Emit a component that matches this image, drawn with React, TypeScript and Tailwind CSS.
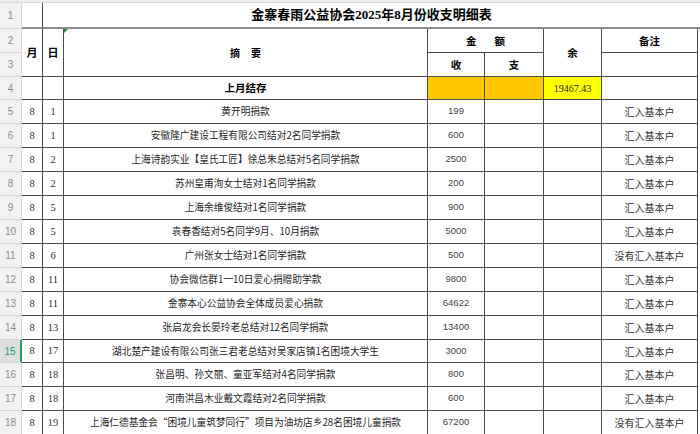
const cols = 'grid grid-cols-[22px_21px_21px_364px_57px_59px_58px_96px_2px]';
const line = 'border-[#4a4a4a]';
const hdrCell = 'flex items-center justify-center bg-[#f2f2f2] border-r border-b border-[#d6d6d6] text-[10px] text-[#8c8c8c] font-["Liberation_Sans",sans-serif]';
const cjk = 'font-["Noto_Sans_CJK_SC",sans-serif]';
const song = 'font-["Liberation_Serif","Noto_Sans_CJK_SC",serif]';

type Row = {
  n: number;
  m: string;
  d: string;
  text: string;
  amt: string;
  note: string;
  h: string;
  active?: boolean;
};

const rows: Row[] = [
  { n: 5, m: '8', d: '1', text: '黄开明捐款', amt: '199', note: '汇入基本户', h: 'h-[24px]' },
  { n: 6, m: '8', d: '1', text: '安徽隆广建设工程有限公司结对2名同学捐款', amt: '600', note: '汇入基本户', h: 'h-[24px]' },
  { n: 7, m: '8', d: '2', text: '上海诗韵实业【皇氏工匠】徐总朱总结对5名同学捐款', amt: '2500', note: '汇入基本户', h: 'h-[24px]' },
  { n: 8, m: '8', d: '2', text: '苏州皇甫洵女士结对1名同学捐款', amt: '200', note: '汇入基本户', h: 'h-[24px]' },
  { n: 9, m: '8', d: '5', text: '上海余维俊结对1名同学捐款', amt: '900', note: '汇入基本户', h: 'h-[24px]' },
  { n: 10, m: '8', d: '5', text: '袁春香结对5名同学9月、10月捐款', amt: '5000', note: '汇入基本户', h: 'h-[24px]' },
  { n: 11, m: '8', d: '6', text: '广州张女士结对1名同学捐款', amt: '500', note: '没有汇入基本户', h: 'h-[24px]' },
  { n: 12, m: '8', d: '11', text: '协会微信群1一10日爱心捐赠助学款', amt: '9800', note: '汇入基本户', h: 'h-[24px]' },
  { n: 13, m: '8', d: '11', text: '金寨本心公益协会全体成员爱心捐款', amt: '64622', note: '汇入基本户', h: 'h-[24px]' },
  { n: 14, m: '8', d: '13', text: '张启龙会长晏玲老总结对12名同学捐款', amt: '13400', note: '汇入基本户', h: 'h-[24px]' },
  { n: 15, m: '8', d: '17', text: '湖北楚产建设有限公司张三君老总结对吴家店镇1名困境大学生', amt: '3000', note: '汇入基本户', h: 'h-[23px]', active: true },
  { n: 16, m: '8', d: '18', text: '张昌明、孙文丽、童亚军结对4名同学捐款', amt: '800', note: '汇入基本户', h: 'h-[24px]' },
  { n: 17, m: '8', d: '18', text: '河南洪昌木业戴文霞结对2名同学捐款', amt: '600', note: '汇入基本户', h: 'h-[24px]' },
  { n: 18, m: '8', d: '19', text: '上海仁德基金会“困境儿童筑梦同行”项目为油坊店乡28名困境儿童捐款', amt: '67200', note: '没有汇入基本户', h: 'h-[24px]' },
];

function DataRow({ r }: { r: Row }) {
  return (
    <div className={`${cols} ${r.h}`}>
      {r.active ? (
        <div className="flex items-center justify-center bg-[#dedede] border-r-2 border-r-[#21a366] border-b border-b-[#d6d6d6] text-[10px] text-[#21a366] font-['Liberation_Sans',sans-serif]">
          {r.n}
        </div>
      ) : (
        <div className={hdrCell}>{r.n}</div>
      )}
      <div className={`flex items-center justify-center border-r border-b ${line} ${song} text-[10.5px] text-[#333]`}>{r.m}</div>
      <div className={`flex items-center justify-center border-r border-b ${line} ${song} text-[10.5px] text-[#333]`}>{r.d}</div>
      <div className={`flex items-center justify-center border-r border-b ${line} ${cjk} text-[9.7px] text-[#262626] whitespace-nowrap overflow-hidden`}>
        {r.text}
      </div>
      <div className={`flex items-center justify-center border-r border-b ${line} font-['Liberation_Sans',sans-serif] text-[9.5px] text-[#444]`}>
        {r.amt}
      </div>
      <div className={`border-r border-b ${line}`} />
      <div className={`border-r border-b ${line}`} />
      <div className={`flex items-center justify-center border-r border-b ${line} ${cjk} text-[10px] text-[#333] whitespace-nowrap`}>
        {r.note}
      </div>
      <div />
    </div>
  );
}

export default function App() {
  return (
    <div className="w-[700px] h-[434px] overflow-hidden bg-white">
      <div className="h-[3px] bg-[#efefef] border-b border-[#d9d9d9]" />

      <div className={`${cols} grid-rows-[26px_24px_24px_23px]`}>
        <div className={`${hdrCell} col-start-1 row-start-1`}>1</div>
        <div className={`${hdrCell} col-start-1 row-start-2`}>2</div>
        <div className={`${hdrCell} col-start-1 row-start-3`}>3</div>
        <div className={`${hdrCell} col-start-1 row-start-4`}>4</div>

        {/* title row */}
        <div className={`col-start-2 row-start-1 border-r ${line} border-b-2 border-b-[#8e8e8e]`} />
        <div className={`col-start-3 col-span-7 row-start-1 border-b-2 border-b-[#8e8e8e] flex items-center justify-center ${song} font-bold text-[13px] text-black`}>
          金寨春雨公益协会2025年8月份收支明细表
        </div>

        {/* header rows */}
        <div className={`col-start-2 row-start-2 row-span-2 flex items-center justify-center border-r border-b ${line} ${cjk} font-bold text-[11px]`}>月</div>
        <div className={`col-start-3 row-start-2 row-span-2 flex items-center justify-center border-r border-b ${line} ${cjk} font-bold text-[11px]`}>日</div>
        <div className={`relative col-start-4 row-start-2 row-span-2 flex items-center justify-center gap-[11px] border-r border-b ${line} ${cjk} font-bold text-[10px]`}>
          <svg className="absolute left-0 top-0" width="4" height="4" viewBox="0 0 4 4">
            <path d="M0 0H4L0 4Z" fill="#1f8a3b" />
          </svg>
          <span>摘</span>
          <span>要</span>
        </div>
        <div className={`col-start-5 col-span-2 row-start-2 flex items-center justify-center gap-[18px] border-r border-b ${line} ${cjk} font-bold text-[10.5px]`}>
          <span>金</span>
          <span>额</span>
        </div>
        <div className={`col-start-5 row-start-3 flex items-center justify-center border-r border-b ${line} ${cjk} font-bold text-[10.5px]`}>收</div>
        <div className={`col-start-6 row-start-3 flex items-center justify-center border-r border-b ${line} ${cjk} font-bold text-[10.5px]`}>支</div>
        <div className={`col-start-7 row-start-2 row-span-2 flex items-center justify-center border-r border-b ${line} ${cjk} font-bold text-[10.5px]`}>余</div>
        <div className={`col-start-8 row-start-2 flex items-center justify-center border-r border-b ${line} ${cjk} font-bold text-[10.5px]`}>备注</div>
        <div className={`col-start-8 row-start-3 border-r border-b ${line}`} />

        {/* 上月结存 */}
        <div className={`col-start-2 row-start-4 border-r border-b ${line}`} />
        <div className={`col-start-3 row-start-4 border-r border-b ${line}`} />
        <div className={`col-start-4 row-start-4 flex items-center justify-center border-r border-b ${line} ${cjk} font-bold text-[10.5px]`}>上月结存</div>
        <div className={`col-start-5 row-start-4 bg-[#ffc800] border-r border-b ${line}`} />
        <div className={`col-start-6 row-start-4 bg-[#ffc800] border-r border-b ${line}`} />
        <div className={`col-start-7 row-start-4 bg-[#ffff00] flex items-center justify-center border-r border-b ${line} ${song} text-[10px] text-[#222]`}>
          19467.43
        </div>
        <div className={`col-start-8 row-start-4 border-r border-b ${line}`} />
      </div>

      {rows.map((r) => (
        <DataRow key={r.n} r={r} />
      ))}
    </div>
  );
}
